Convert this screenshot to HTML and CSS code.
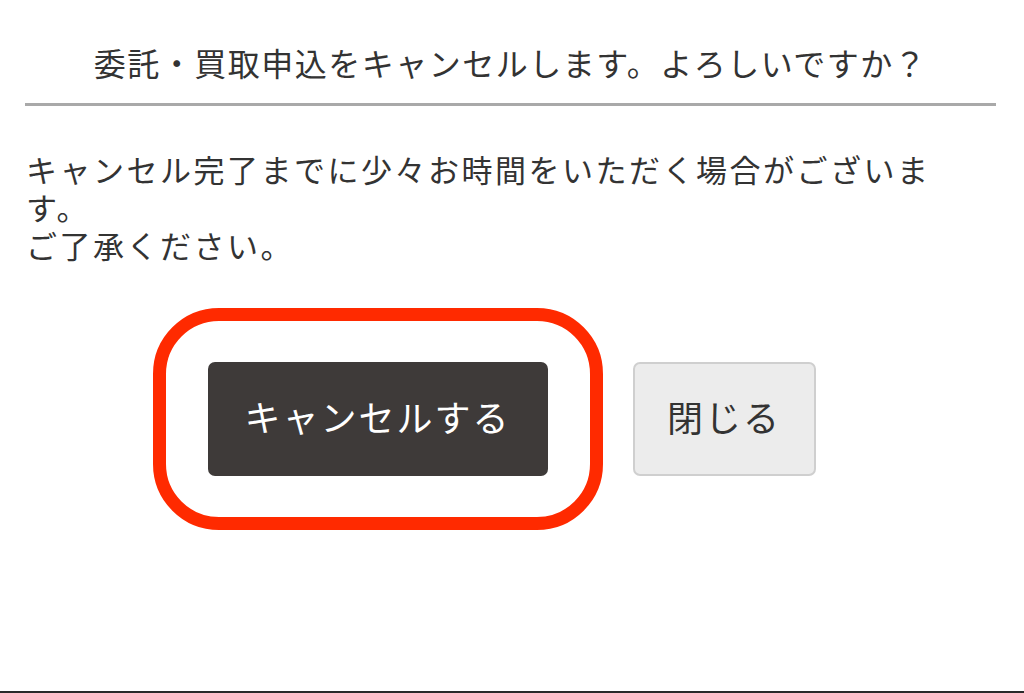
FILE: index.html
```html
<!doctype html>
<html lang="ja">
<head>
	<meta charset="utf-8">
	<title>キャンセル確認</title>
	<link rel="stylesheet" href="styles.css">
</head>
<body>
<div class="dialog">
	<h1 class="dialog-title">委託・買取申込をキャンセルします。よろしいですか？</h1>
	<p class="dialog-message">キャンセル完了までに少々お時間をいただく場合がございます。<br>ご了承ください。</p>
	<div class="dialog-actions">
		<button class="btn btn-cancel">キャンセルする<span class="mark"></span></button>
		<button class="btn btn-close">閉じる</button>
	</div>
</div>
</body>
</html>
```

FILE: styles.css
```css
html, body {margin: 0; padding: 0; background: #fff;}
body {height: 693px; box-sizing: border-box; border-bottom: 2px solid #2a2a2a; font-family: "Noto Sans CJK JP", "Noto Sans", sans-serif; color: #333;}
.dialog {margin: 0 28px 0 25px;}
.dialog-title {margin: 0; padding: 41px 0 20px; font-size: 32px; line-height: 42px; font-weight: normal; text-align: center; letter-spacing: 1.5px; border-bottom: 3px solid #a9a9a9;}
.dialog-message {margin: 44px 0 0; width: 935px; padding-left: 1px; font-size: 31px; line-height: 38px; letter-spacing: 2.5px;}
.dialog-actions {display: flex; justify-content: center; gap: 85px; margin-top: 98px; padding-left: 2px;}
.btn {position: relative; box-sizing: border-box; height: 114px; border-radius: 7px; font-family: inherit; font-size: 36px; letter-spacing: 2px; padding: 0 0 6px; cursor: pointer;}
.btn-cancel {width: 340px; background: #3e3a39; color: #fff; border: none;}
.btn-close {width: 183px; background: #ececec; color: #333; border: 2px solid #cfcfcf;}
.mark {position: absolute; left: -55px; right: -55px; top: -54px; bottom: -54px; border: 13px solid #ff2a00; border-radius: 66px;}
```
